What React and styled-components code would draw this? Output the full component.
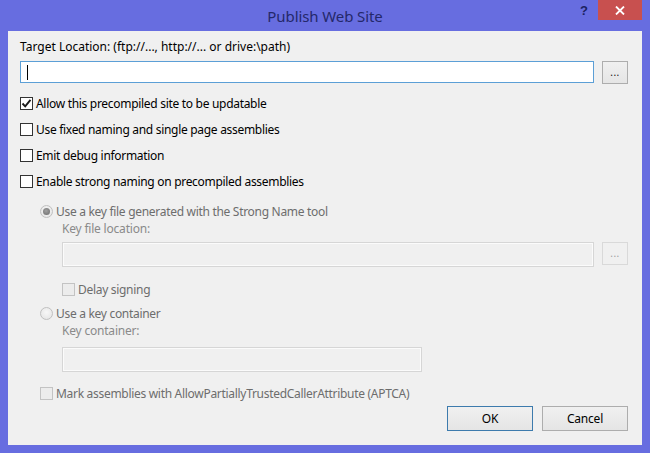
import React from "react";
import styled, { createGlobalStyle, css } from "styled-components";

const GlobalStyle = createGlobalStyle`
  html, body {
    margin: 0;
    padding: 0;
    background: #676de0;
  }
  body {
    font-family: "Noto Sans", "Open Sans", sans-serif;
    font-size: 12px;
  }
`;

function Check({ checked, disabled }) {
  return (
    <CheckBox disabled={disabled}>
      {checked && (
        <svg width="11" height="11" viewBox="0 0 11 11">
          <path d="M1.5 5.5 L4.2 8.3 L9.5 1.8" fill="none" stroke="#1a1a1a" strokeWidth="1.9" />
        </svg>
      )}
    </CheckBox>
  );
}

function App() {
  return (
    <>
      <GlobalStyle />
      <Window>
        <TitleBar>
          <span />
          <Title>Publish Web Site</Title>
          <Controls>
            <Help>?</Help>
            <Close>
              <svg width="10" height="9" viewBox="0 0 10 9">
                <path d="M1 0.5 L9 8.5 M9 0.5 L1 8.5" stroke="#fff" strokeWidth="1.8" />
              </svg>
            </Close>
          </Controls>
        </TitleBar>

        <Body>
          <Label>Target Location: (ftp://..., http://... or drive:\path)</Label>
          <FieldRow>
            <TextBox focused>
              <Caret />
            </TextBox>
            <Browse>...</Browse>
          </FieldRow>

          <Options>
            <Option>
              <Check checked />
              Allow this precompiled site to be updatable
            </Option>
            <Option>
              <Check />
              Use fixed naming and single page assemblies
            </Option>
            <Option>
              <Check />
              Emit debug information
            </Option>
            <Option>
              <Check />
              Enable strong naming on precompiled assemblies
            </Option>
          </Options>

          <Strong>
            <RadioRow>
              <Radio selected />
              Use a key file generated with the Strong Name tool
            </RadioRow>
            <Nested>
              <SubLabel>Key file location:</SubLabel>
              <FieldRow tall>
                <TextBox disabled />
                <Browse disabled>...</Browse>
              </FieldRow>
              <DelayRow>
                <Check disabled />
                Delay signing
              </DelayRow>
            </Nested>
            <RadioRow second>
              <Radio />
              Use a key container
            </RadioRow>
            <Nested>
              <SubLabel>Key container:</SubLabel>
              <ContainerBox>
                <TextBox disabled />
              </ContainerBox>
            </Nested>
            <MarkRow>
              <Check disabled />
              Mark assemblies with AllowPartiallyTrustedCallerAttribute (APTCA)
            </MarkRow>
          </Strong>

          <Footer>
            <DialogButton primary>OK</DialogButton>
            <DialogButton>Cancel</DialogButton>
          </Footer>
        </Body>
      </Window>
    </>
  );
}

const Window = styled.div`
  width: 650px;
  height: 453px;
  background: #676de0;
  display: flex;
  flex-direction: column;
  box-sizing: border-box;
  padding: 0 8px 8px;
`;

const TitleBar = styled.div`
  height: 31px;
  flex: none;
  display: grid;
  grid-template-columns: 1fr auto 1fr;
  align-items: start;
`;

const Title = styled.div`
  font-family: "Noto Sans", sans-serif;
  font-size: 15px;
  color: #24286a;
  line-height: 32px;
  letter-spacing: -0.1px;
`;

const Controls = styled.div`
  justify-self: end;
  display: flex;
  align-items: flex-start;
`;

const Help = styled.div`
  font-family: "Liberation Sans", sans-serif;
  font-weight: bold;
  font-size: 13px;
  color: #1c2260;
  line-height: 22px;
  margin-right: 10px;
`;

const Close = styled.div`
  width: 44px;
  height: 20px;
  background: #c8504f;
  display: flex;
  align-items: center;
  justify-content: center;
`;

const Body = styled.div`
  flex: 1;
  background: #f0f0f0;
  padding: 8px 14px 0 12px;
  display: flex;
  flex-direction: column;
  color: #000;
`;

const Label = styled.div`
  line-height: 16px;
  letter-spacing: 0;
`;

const FieldRow = styled.div`
  display: flex;
  align-items: flex-start;
  gap: 8px;
  height: ${(p) => (p.tall ? "25px" : "23px")};
  margin-top: ${(p) => (p.tall ? "5px" : "6px")};
`;

const TextBox = styled.div`
  flex: 1;
  align-self: stretch;
  box-sizing: border-box;
  display: flex;
  align-items: center;
  padding-left: 6px;
  ${(p) =>
    p.disabled
      ? css`
          border: 1px solid #d6d6d6;
          box-shadow: inset 0 0 0 1px #fbfbfb;
          background: #f0f0f0;
        `
      : css`
          border: 1px solid #5c9fd6;
          background: #fff;
        `}
  ${(p) => p.focused && css`height: 22px; align-self: flex-start;`}
`;

const Caret = styled.div`
  width: 1px;
  height: 15px;
  background: #000;
`;

const Browse = styled.div`
  width: 26px;
  height: 23px;
  box-sizing: border-box;
  display: flex;
  justify-content: center;
  align-items: center;
  font-size: 10px;
  letter-spacing: 0.5px;
  padding-bottom: 2px;
  ${(p) =>
    p.disabled
      ? css`
          border: 1px solid #d9d9d9;
          background: #f0f0f0;
          color: #a0a0a0;
        `
      : css`
          border: 1px solid #adadad;
          background: linear-gradient(#f0f0f0, #e5e5e5);
          color: #111;
        `}
`;

const Options = styled.div`
  margin-top: 6px;
  display: flex;
  flex-direction: column;
`;

const rowText = css`
  display: flex;
  align-items: center;
  gap: 3px;
  letter-spacing: -0.3px;
  white-space: nowrap;
`;

const Option = styled.label`
  ${rowText}
  height: 26px;
  &:last-child {
    height: 27px;
  }
`;

const CheckBox = styled.span`
  width: 13px;
  height: 13px;
  box-sizing: border-box;
  flex: none;
  display: flex;
  align-items: center;
  justify-content: center;
  border: 1px solid ${(p) => (p.disabled ? "#c3c3c3" : "#333")};
  background: ${(p) => (p.disabled ? "#ececec" : "#fff")};
`;

const Strong = styled.div`
  padding-left: 20px;
  color: #6d6d6d;
  display: flex;
  flex-direction: column;
`;

const RadioRow = styled.div`
  ${rowText}
  height: 20px;
  margin-top: ${(p) => (p.second ? "4px" : "6px")};
`;

const Radio = styled.span`
  width: 13px;
  height: 13px;
  border-radius: 50%;
  box-sizing: border-box;
  flex: none;
  display: flex;
  align-items: center;
  justify-content: center;
  border: 1px solid #c0c0c0;
  background: radial-gradient(circle at 50% 40%, #f7f7f7, #e2e2e2);
  &::after {
    content: "";
    display: ${(p) => (p.selected ? "block" : "none")};
    width: 7px;
    height: 7px;
    border-radius: 50%;
    background: radial-gradient(circle at 45% 40%, #a0a0a0, #6a6a6a);
  }
`;

const Nested = styled.div`
  padding-left: 22px;
  display: flex;
  flex-direction: column;
`;

const SubLabel = styled.div`
  line-height: 16px;
  color: #8a8a8a;
  letter-spacing: -0.2px;
`;

const DelayRow = styled.div`
  ${rowText}
  height: 20px;
  margin-top: 12px;
`;

const ContainerBox = styled.div`
  width: 360px;
  height: 25px;
  margin-top: 8px;
  display: flex;
`;

const MarkRow = styled.div`
  ${rowText}
  height: 20px;
  margin-top: 11px;
`;

const Footer = styled.div`
  display: flex;
  justify-content: flex-end;
  gap: 9px;
  margin-top: 3px;
`;

const DialogButton = styled.button`
  width: 86px;
  height: 25px;
  box-sizing: border-box;
  font-family: "Noto Sans", sans-serif;
  font-size: 12px;
  color: #000;
  padding: 0;
  background: linear-gradient(#f0f0f0, #e5e5e5);
  border: 1px solid ${(p) => (p.primary ? "#3d7bad" : "#adadad")};
  letter-spacing: -0.2px;
`;

export default App;
